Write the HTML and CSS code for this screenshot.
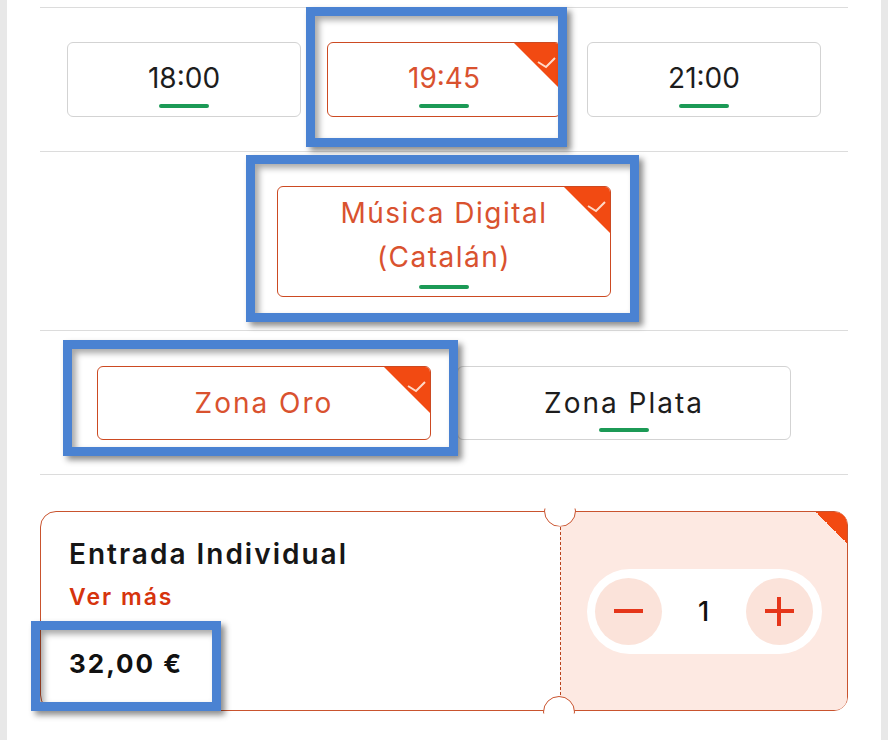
FILE: index.html
```html
<!DOCTYPE html>
<html lang="es">
<head>
    <meta charset="UTF-8">
    <meta name="viewport" content="width=device-width, initial-scale=1.0">
    <title>Selección de entradas</title>
    <link rel="stylesheet" href="styles.css">
</head>
<body>
    <div class="screen">
        <main class="panel">
            <section class="group group-times">
                <div class="row">
                    <button class="option option-time">
                        <span class="label">18:00</span>
                        <span class="bar"></span>
                    </button>
                    <button class="option option-time selected">
                        <span class="label">19:45</span>
                        <span class="bar"></span>
                        <svg class="corner" viewBox="0 0 46 46"><path d="M0 0H46V46Z" fill="#f24a12"/><path d="M24 19L32 24L41 15" fill="none" stroke="#ffd9c8" stroke-width="2"/></svg>
                    </button>
                    <button class="option option-time">
                        <span class="label">21:00</span>
                        <span class="bar"></span>
                    </button>
                </div>
            </section>

            <section class="group group-format">
                <div class="row">
                    <button class="option option-format selected">
                        <span class="label">Música Digital<br>(Catalán)</span>
                        <span class="bar"></span>
                        <svg class="corner" viewBox="0 0 46 46"><path d="M0 0H46V46Z" fill="#f24a12"/><path d="M24 19L32 24L41 15" fill="none" stroke="#ffd9c8" stroke-width="2"/></svg>
                    </button>
                </div>
            </section>

            <section class="group group-zone">
                <div class="row">
                    <button class="option option-zone selected">
                        <span class="label">Zona Oro</span>
                        <svg class="corner" viewBox="0 0 46 46"><path d="M0 0H46V46Z" fill="#f24a12"/><path d="M24 19L32 24L41 15" fill="none" stroke="#ffd9c8" stroke-width="2"/></svg>
                    </button>
                    <button class="option option-zone">
                        <span class="label">Zona Plata</span>
                        <span class="bar"></span>
                    </button>
                </div>
            </section>

            <section class="group group-ticket">
                <div class="ticket">
                    <div class="ticket-info">
                        <div class="ticket-name">Entrada Individual</div>
                        <a class="ticket-more" href="#">Ver más</a>
                        <div class="ticket-price">32,00 €</div>
                    </div>
                    <div class="ticket-qty">
                        <div class="counter">
                            <button class="step step-minus" aria-label="Quitar"><span></span></button>
                            <span class="qty">1</span>
                            <button class="step step-plus" aria-label="Añadir"><span></span></button>
                        </div>
                    </div>
                </div>
            </section>
        </main>

        <div class="mark mark-time"></div>
        <div class="mark mark-format"></div>
        <div class="mark mark-zone"></div>
        <div class="mark mark-price"></div>
    </div>
</body>
</html>
```

FILE: styles.css
```css
body {
    margin: 0;
    font-family: Inter, "Noto Sans", sans-serif;
    color: #1d1d1d;
}

.screen {
    position: relative;
    width: 888px;
    height: 740px;
    padding: 0 7px;
    box-sizing: border-box;
    background-color: #e8e8e8;
    overflow: hidden;
}

.panel {
    height: 100%;
    padding: 7px 33px 0;
    background-color: #fff;
    box-sizing: border-box;
}

.group {
    border-top: 1px solid #dcdcdc;
}

.group-times {
    padding: 34px 0 34px;
}

.group-format {
    padding: 34px 0 33px;
}

.group-zone {
    padding: 35px 0 34px;
}

.group-ticket {
    padding-top: 36px;
}

.row {
    display: flex;
    justify-content: center;
    gap: 26px;
}

/* option buttons */
.option {
    position: relative;
    display: flex;
    flex-direction: column;
    align-items: center;
    width: 234px;
    padding: 0;
    border: 1px solid #d3d3d3;
    border-radius: 6px;
    background-color: #fff;
    font-family: inherit;
    color: #1d1d1d;
    overflow: hidden;
    box-sizing: border-box;
}

.option .label {
    font-size: 28px;
    line-height: 30px;
    font-weight: 400;
}

.bar {
    display: block;
    width: 50px;
    height: 4px;
    border-radius: 2px;
    background-color: #1c9a56;
}

.option.selected {
    border-color: #cc4a22;
}

.option.selected .label {
    color: #d9522f;
}

.corner {
    position: absolute;
    top: 0;
    right: 0;
    width: 46px;
    height: 46px;
}

.option-time {
    height: 75px;
    padding-top: 20px;
}

.option-time .bar {
    margin-top: 11px;
}

.option-format {
    width: 334px;
    height: 111px;
    padding-top: 4px;
}

.option-format .label {
    line-height: 44px;
    letter-spacing: 1.5px;
}

.option-format .bar {
    margin-top: 6px;
}

.option-zone {
    width: 334px;
    height: 74px;
    padding-top: 21px;
}

.option-zone .label {
    letter-spacing: 2px;
}

.option-zone .bar {
    margin-top: 10px;
}

/* ticket card */
.ticket {
    position: relative;
    display: grid;
    grid-template-columns: 519px 1fr;
    height: 200px;
    border: 1.5px solid #c9532e;
    border-radius: 16px 14px 14px 16px;
    box-sizing: border-box;
}

.ticket-info {
    padding: 25px 28px 0;
}

.ticket-name {
    font-size: 28px;
    line-height: 34px;
    font-weight: 600;
    letter-spacing: 2px;
    color: #161616;
}

.ticket-more {
    display: block;
    margin-top: 11px;
    font-size: 23px;
    line-height: 30px;
    font-weight: 600;
    letter-spacing: 2px;
    color: #d6340d;
    text-decoration: none;
}

.ticket-price {
    margin-top: 35px;
    font-size: 26px;
    line-height: 34px;
    font-weight: 700;
    letter-spacing: 2px;
    color: #111;
}

.ticket-qty {
    position: relative;
    display: flex;
    align-items: center;
    justify-content: center;
    border-left: 1px dashed #b8421c;
    border-radius: 0 12px 12px 0;
    background-color: #fde9e2;
}

.ticket-qty::after {
    content: "";
    position: absolute;
    top: 0;
    right: 0;
    width: 31px;
    height: 31px;
    border-top-right-radius: 12px;
    background: linear-gradient(to bottom left, #f24a12 50%, transparent 50%);
}

/* notches of the ticket, top and bottom */
.ticket-qty::before,
.ticket::after {
    content: "";
    position: absolute;
    width: 32px;
    height: 32px;
    border: 1.5px solid #c9532e;
    border-radius: 50%;
    background-color: #fff;
    box-sizing: border-box;
}

.ticket-qty::before {
    left: -17px;
    top: -17.5px;
    clip-path: inset(14px 0 0 0);
}

.ticket::after {
    left: 502px;
    bottom: -17.5px;
    clip-path: inset(0 0 14px 0);
}

.counter {
    display: flex;
    align-items: center;
    justify-content: space-between;
    width: 235px;
    height: 85px;
    padding: 0 9px 0 8px;
    border-radius: 43px;
    background-color: #fff;
    box-sizing: border-box;
}

.step {
    position: relative;
    width: 67px;
    height: 67px;
    padding: 0;
    border: none;
    border-radius: 50%;
    background-color: #fbe3da;
    cursor: pointer;
}

.step span,
.step-plus::after {
    position: absolute;
    left: 19px;
    top: 31px;
    width: 29px;
    height: 4px;
    background-color: #e5361a;
}

.step-plus::after {
    content: "";
    left: 31px;
    top: 19px;
    width: 4px;
    height: 29px;
}

.qty {
    font-size: 27px;
    font-weight: 500;
    color: #111;
}

/* annotation frames */
.mark {
    position: absolute;
    border: 9px solid #4a82d2;
    box-shadow: 4px 4px 6px rgba(0, 0, 0, 0.45), inset 4px 4px 6px rgba(0, 0, 0, 0.35);
    box-sizing: border-box;
    pointer-events: none;
}

.mark-time {
    left: 306px;
    top: 7px;
    width: 261px;
    height: 140px;
}

.mark-format {
    left: 246px;
    top: 155px;
    width: 393px;
    height: 167px;
}

.mark-zone {
    left: 63px;
    top: 340px;
    width: 395px;
    height: 116px;
}

.mark-price {
    left: 31px;
    top: 621px;
    width: 190px;
    height: 90px;
}
```
